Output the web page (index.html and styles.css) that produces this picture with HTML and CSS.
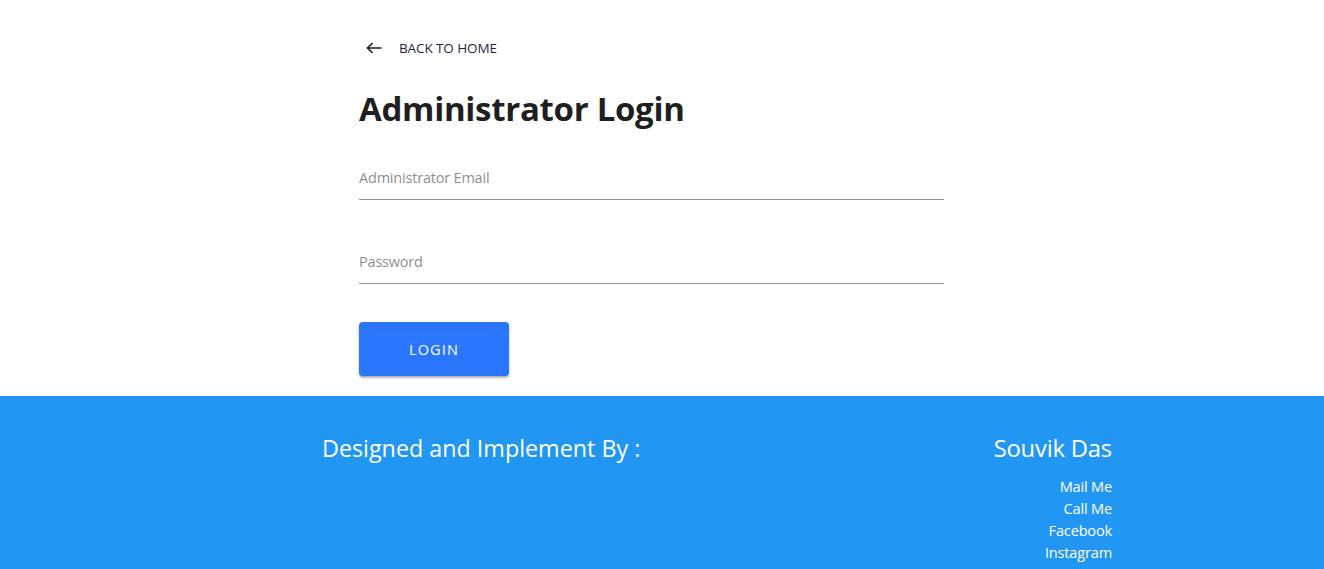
FILE: index.html
```html
<!DOCTYPE html>
<html lang="en">
<head>
<meta charset="utf-8">
<title>Administrator Login</title>
<link rel="stylesheet" href="styles.css">
</head>
<body>
<main class="page">
  <section class="login">
    <a class="back" href="#">
      <svg class="back-icon" width="16" height="12" viewBox="0 0 16 12" aria-hidden="true">
        <path d="M15.5 6H1.5M6.5 1L1.5 6l5 5" fill="none" stroke="#1f1f1f" stroke-width="1.6"/>
      </svg>
      <span>BACK TO HOME</span>
    </a>
    <h1 class="title">Administrator Login</h1>
    <form class="form">
      <label class="field">
        <span class="field-label">Administrator Email</span>
      </label>
      <label class="field">
        <span class="field-label">Password</span>
      </label>
      <button type="button" class="btn">LOGIN</button>
    </form>
  </section>
</main>
<footer class="footer">
  <div class="footer-left">
    <h2 class="footer-title">Designed and Implement By :</h2>
  </div>
  <div class="footer-right">
    <h2 class="footer-title name">Souvik Das</h2>
    <ul class="links">
      <li>Mail Me</li>
      <li>Call Me</li>
      <li>Facebook</li>
      <li>Instagram</li>
    </ul>
  </div>
</footer>
</body>
</html>
```
FILE: styles.css
```css
* { box-sizing: border-box; }
html, body { margin: 0; padding: 0; }
body {
  font-family: "Open Sans", "Noto Sans", sans-serif;
  background: #fff;
  color: #1f1f1f;
}
.page {
  padding: 37px 0 20px 359px;
}
.login {
  width: 585px;
}
.back {
  display: flex;
  align-items: center;
  gap: 17px;
  padding-left: 7px;
  height: 22px;
  text-decoration: none;
  color: #2a1f3f;
  font-size: 13.5px;
  letter-spacing: -0.1px;
}
.back-icon { display: block; }
.title {
  margin: 24px 0 0;
  font-size: 33px;
  font-weight: 700;
  line-height: 52px;
  color: #1f1f1f;
  letter-spacing: -0.3px;
}
.form {
  display: flex;
  flex-direction: column;
  margin-top: 22px;
}
.field {
  display: block;
  height: 43px;
  border-bottom: 1px solid #949494;
  margin-bottom: 41px;
}
.field + .field { margin-bottom: 38px; }
.field-label {
  display: block;
  padding-top: 11px;
  font-size: 14.5px;
  color: #8f8f8f;
  letter-spacing: -0.2px;
}
.btn {
  width: 150px;
  height: 54px;
  border: 0;
  border-radius: 4px;
  background: #2a76ff;
  color: #fff;
  font-family: inherit;
  font-size: 14.5px;
  letter-spacing: 1.1px;
  box-shadow: 0 2px 3px rgba(0,0,0,0.25), 0 1px 1px rgba(0,0,0,0.14);
  cursor: pointer;
}
.footer {
  background: #2196f3;
  color: #fff;
  display: flex;
  justify-content: space-between;
  padding: 36px 212px 0 322px;
  height: 173px;
}
.footer-title {
  margin: 0;
  font-size: 23.3px;
  font-weight: 400;
  line-height: 32px;
}
.footer-title.name { font-size: 23.8px; letter-spacing: -0.2px; }
.footer-right { text-align: right; }
.links {
  list-style: none;
  margin: 11px 0 0;
  padding: 0;
  font-size: 14.6px;
  line-height: 22px;
  letter-spacing: -0.2px;
}
```
